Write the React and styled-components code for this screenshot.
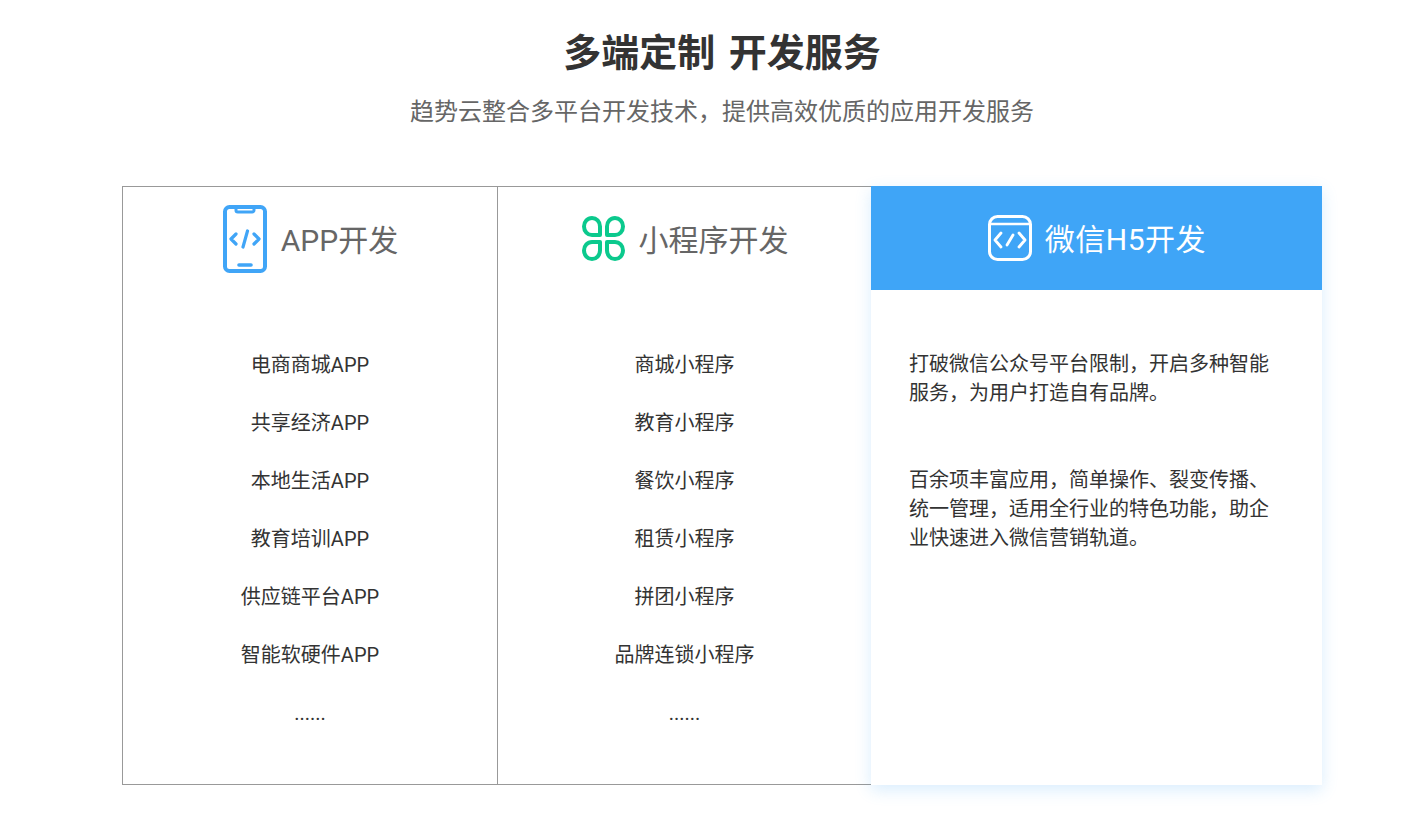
import React from "react";
import styled, { createGlobalStyle } from "styled-components";

const FONT = `Roboto, "Noto Sans CJK SC", sans-serif`;

const GlobalStyle = createGlobalStyle`
  body {
    margin: 0;
    background: #fff;
    font-family: ${FONT};
  }
`;

const appItems = ["电商商城APP", "共享经济APP", "本地生活APP", "教育培训APP", "供应链平台APP", "智能软硬件APP", "......"];
const miniItems = ["商城小程序", "教育小程序", "餐饮小程序", "租赁小程序", "拼团小程序", "品牌连锁小程序", "......"];
const subtitle = "趋势云整合多平台开发技术\uFF0C提供高效优质的应用开发服务";
const h5Text = [
  "打破微信公众号平台限制\uFF0C开启多种智能服务\uFF0C为用户打造自有品牌。",
  "百余项丰富应用\uFF0C简单操作、裂变传播、统一管理\uFF0C适用全行业的特色功能\uFF0C助企业快速进入微信营销轨道。",
];

function PhoneIcon() {
  return (
    <svg width="44" height="68" viewBox="0 0 44 68" fill="none" stroke="#40a5f7" strokeLinecap="round" strokeLinejoin="round">
      <rect x="2" y="2" width="40" height="64" rx="4.5" strokeWidth="4" />
      <path d="M13 2v3.2a1.8 1.8 0 0 0 1.8 1.8h14.4a1.8 1.8 0 0 0 1.8-1.8V2" strokeWidth="3" />
      <path d="M13 29l-5 5 5 5M31 29l5 5-5 5M24.5 26l-4.5 16" strokeWidth="3.2" />
      <path d="M16 60h12" strokeWidth="3.6" />
    </svg>
  );
}

function CloverIcon() {
  return (
    <svg width="43" height="45" viewBox="0 0 43 45" fill="none" stroke="#0bc98d" strokeWidth="4" strokeLinejoin="round">
      <path d="M18 19H10A8 8.5 0 1 1 18 10.5Z" />
      <path d="M25 19H33A8 8.5 0 1 0 25 10.5Z" />
      <path d="M18 26H10A8 8.5 0 1 0 18 34.5Z" />
      <path d="M25 26H33A8 8.5 0 1 1 25 34.5Z" />
    </svg>
  );
}

function WindowIcon() {
  return (
    <svg width="44" height="46" viewBox="0 0 44 46" fill="none" stroke="#fff" strokeLinecap="round" strokeLinejoin="round">
      <rect x="1.5" y="1.5" width="41" height="43" rx="8" strokeWidth="3" />
      <path d="M2 9h40" strokeWidth="2.4" />
      <path d="M13 18l-6 7 6 7M31 18l6 7-6 7M25 20l-6 10" strokeWidth="2.8" />
    </svg>
  );
}

export default function App() {
  return (
    <Page>
      <GlobalStyle />
      <Title>多端定制 开发服务</Title>
      <Subtitle>{subtitle}</Subtitle>
      <Board>
        <Column $first>
          <ColumnHead>
            <PhoneIcon />
            <HeadLabel>APP开发</HeadLabel>
          </ColumnHead>
          <ItemList>
            {appItems.map((item) => (
              <Item key={item}>{item}</Item>
            ))}
          </ItemList>
        </Column>
        <Column>
          <ColumnHead>
            <CloverIcon />
            <HeadLabel>小程序开发</HeadLabel>
          </ColumnHead>
          <ItemList>
            {miniItems.map((item) => (
              <Item key={item}>{item}</Item>
            ))}
          </ItemList>
        </Column>
        <ActiveColumn>
          <ActiveHead>
            <WindowIcon />
            <HeadLabel $active>微信H5开发</HeadLabel>
          </ActiveHead>
          <ActiveBody>
            {h5Text.map((text) => (
              <p key={text}>{text}</p>
            ))}
          </ActiveBody>
        </ActiveColumn>
      </Board>
    </Page>
  );
}

const Page = styled.div`
  width: 1200px;
  margin-left: 122px;
  padding: 26px 0 48px;
`;

const Title = styled.h1`
  margin: 0;
  font-size: 38px;
  line-height: 54px;
  font-weight: 700;
  word-spacing: 4px;
  text-align: center;
  color: #333;
`;

const Subtitle = styled.p`
  margin: 10px 0 0;
  font-size: 24px;
  line-height: 44px;
  text-align: center;
  color: #666;
`;

const Board = styled.div`
  display: flex;
  height: 599px;
  margin-top: 52px;
`;

const Column = styled.div`
  box-sizing: border-box;
  width: ${(p) => (p.$first ? "376px" : "373px")};
  height: 599px;
  border: 1px solid #999;
  border-left-width: ${(p) => (p.$first ? "1px" : "0")};
  border-right-width: ${(p) => (p.$first ? "1px" : "0")};
`;

const ColumnHead = styled.div`
  display: flex;
  align-items: center;
  justify-content: center;
  gap: 14px;
  height: 103px;
  padding-left: 1px;
`;

const HeadLabel = styled.span`
  padding-top: 4px;
  font-size: 30px;
  line-height: 40px;
  letter-spacing: ${(p) => (p.$active ? "0.5px" : "0")};
  color: ${(p) => (p.$active ? "#fff" : "#666")};
`;

const ItemList = styled.ul`
  margin: 0;
  padding: 45px 0 0;
  list-style: none;
`;

const Item = styled.li`
  height: 58px;
  line-height: 60px;
  font-size: 20px;
  text-align: center;
  color: #333;
`;

const ActiveColumn = styled.div`
  flex: 1;
  position: relative;
  background: #fff;
  box-shadow: 0 5px 15px rgba(64, 165, 247, 0.2);
`;

const ActiveHead = styled(ColumnHead)`
  gap: 13px;
  height: 104px;
  background: #3fa5f7;
`;

const ActiveBody = styled.div`
  padding: 60px 38px 0 38px;

  p {
    margin: 0 0 58px;
    font-size: 20px;
    line-height: 29px;
    color: #333;
  }
`;
